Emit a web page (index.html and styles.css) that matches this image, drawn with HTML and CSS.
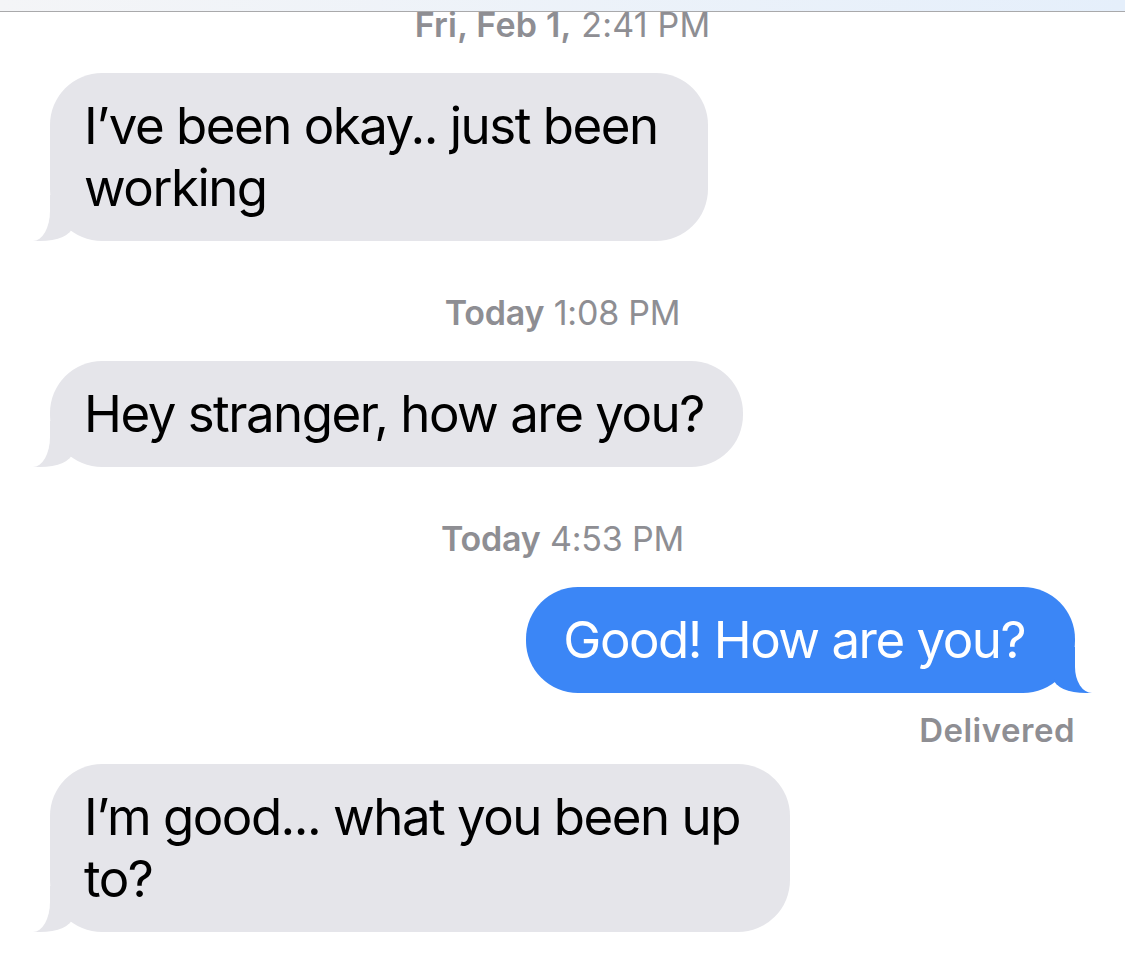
FILE: index.html
```html
<!DOCTYPE html>
<html lang="en">
<head>
    <meta charset="UTF-8">
    <meta name="viewport" content="width=device-width, initial-scale=1.0">
    <title>Messages</title>
    <link rel="stylesheet" href="styles.css">
</head>
<body>
    <div class="topbar"></div>
    <div class="thread">
        <div class="stamp first"><b>Fri, Feb 1,</b> 2:41 PM</div>
        <div class="bubble in wrap">I’ve been okay.. just been<br>working</div>

        <div class="stamp"><b>Today</b> 1:08 PM</div>
        <div class="bubble in">Hey stranger, how are you?</div>

        <div class="stamp"><b>Today</b> 4:53 PM</div>
        <div class="bubble out">Good! How are you?</div>
        <div class="status">Delivered</div>

        <div class="bubble in wrap">I’m good... what you been up<br>to?</div>
    </div>
</body>
</html>
```

FILE: styles.css
```css
body {
    margin: 0;
    background-color: #ffffff;
    font-family: Inter, 'Noto Sans', sans-serif;
    color: #000;
}
.topbar {
    height: 11px;
    background: linear-gradient(to right, #f4f5f7, #e5effb);
    border-bottom: 1px solid #a9a9ab;
}
.thread {
    display: flex;
    flex-direction: column;
    padding: 0 50px;
}
.stamp {
    align-self: center;
    font-size: 34px;
    line-height: 40px;
    color: #8e8e93;
    margin-top: 52px;
    margin-bottom: 28px;
    letter-spacing: -0.2px;
}
.stamp b {
    font-weight: 600;
}
.stamp.first {
    margin-top: -7px;
    margin-bottom: 28px;
    letter-spacing: 0.2px;
}
.bubble {
    position: relative;
    font-size: 51px;
    line-height: 62px;
    letter-spacing: -1.5px;
    padding: 22px 39px 22px 34px;
    border-radius: 52px;
    width: fit-content;
}
.bubble.wrap {
    padding-right: 50px;
}
.in {
    align-self: flex-start;
    background-color: #e5e5ea;
}
.out {
    align-self: flex-end;
    background-color: #3b86f6;
    color: #fff;
    padding: 22px 50px 22px 37px;
}
/* tails */
.bubble::before,
.bubble::after {
    content: "";
    position: absolute;
    bottom: 0;
}
.in::before {
    left: -18px;
    width: 40px;
    height: 46px;
    background-color: #e5e5ea;
    border-bottom-right-radius: 32px 14px;
}
.in::after {
    left: -40px;
    width: 40px;
    height: 50px;
    background-color: #fff;
    border-bottom-right-radius: 17px 30px;
}
.out::before {
    right: -19px;
    width: 40px;
    height: 46px;
    background-color: #3b86f6;
    border-bottom-left-radius: 32px 14px;
}
.out::after {
    right: -40px;
    width: 40px;
    height: 50px;
    background-color: #fff;
    border-bottom-left-radius: 17px 26px;
}
.status {
    align-self: flex-end;
    font-size: 33px;
    line-height: 40px;
    font-weight: 600;
    color: #8e8e93;
    margin: 17px 0 14px;
    letter-spacing: 0.5px;
}
```
